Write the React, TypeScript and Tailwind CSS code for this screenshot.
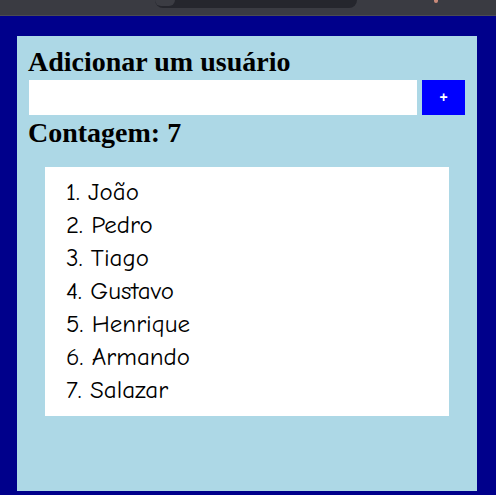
import React, { useState } from 'react';

const initialUsers = ['João', 'Pedro', 'Tiago', 'Gustavo', 'Henrique', 'Armando', 'Salazar'];

export default function App() {
  const [users, setUsers] = useState<string[]>(initialUsers);
  const [name, setName] = useState('');

  const addUser = () => {
    if (!name.trim()) return;
    setUsers([...users, name.trim()]);
    setName('');
  };

  return (
    <div className="flex flex-col w-[496px] h-[495px] bg-[#00008b] overflow-hidden">
      {/* browser chrome strip */}
      <div className="h-[16px] shrink-0 bg-[#3a3b42] border-b border-[#4a4b52] flex items-start">
        <div className="ml-[155px] w-[202px] h-[8px] bg-[#25262d] rounded-b-[8px] flex items-start">
          <div className="w-[20px] h-[6px] bg-[#3b3c43] rounded-b-full" />
        </div>
        <div className="ml-[77px] w-[4px] h-[3px] bg-[#c98a7a] rounded-b-full" />
      </div>

      <main className="flex-1 pl-[17px] pr-[19px] pt-[20px] pb-[4px]">
        <section className="h-full bg-[#add8e6] px-[11px] pt-[10px] font-['Liberation_Serif',serif] text-black">
          <h2 className="text-[28px] font-bold leading-[32px]">Adicionar um usuário</h2>
          <div className="flex gap-[5px] mt-[2px] pl-[1px] pr-[1px]">
            <input
              value={name}
              onChange={(e) => setName(e.target.value)}
              className="flex-1 h-[35px] bg-white outline-none px-2 text-[18px]"
            />
            <button
              onClick={addUser}
              className="w-[43px] h-[35px] bg-[#0000ff] text-white text-[14px] font-bold font-['Liberation_Sans',sans-serif]"
            >
              +
            </button>
          </div>
          <h2 className="text-[28px] font-bold leading-[32px] mt-[2px]">Contagem: {users.length}</h2>

          <ol className="mx-[17px] mt-[18px] bg-white pl-[21px] pt-[8px] pb-[10px] font-['Comic_Sans_MS','Comic_Neue','Lato',sans-serif] text-[25px] leading-[33px]">
            {users.map((u, i) => (
              <li key={i}>
                {i + 1}. {u}
              </li>
            ))}
          </ol>
        </section>
      </main>
    </div>
  );
}
